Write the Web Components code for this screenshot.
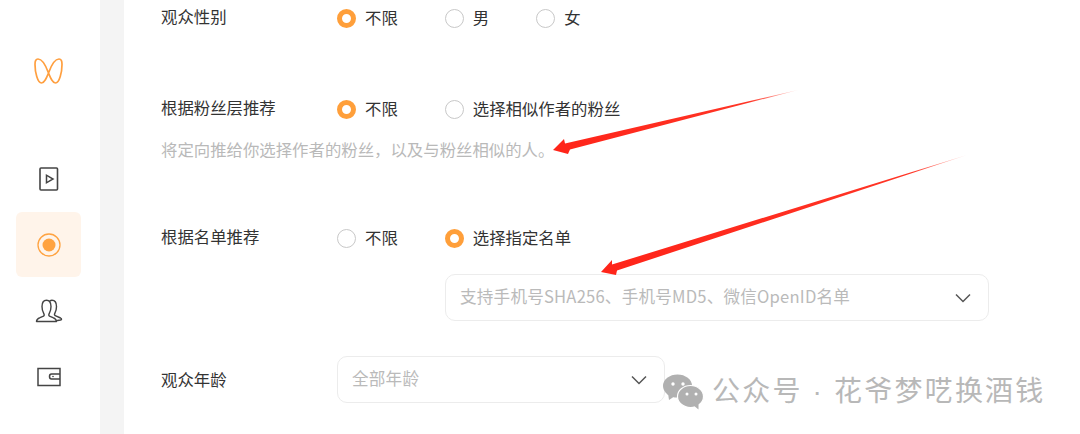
<!DOCTYPE html>
<html lang="zh">
<head>
<meta charset="utf-8">
<style>
    html, body { margin: 0; height: 434px; overflow: hidden; background: #fff; }
    body {
        font-family: "Noto Sans CJK SC", "Liberation Sans", sans-serif;
        color: #333;
        font-size: 16.4px;
    }
</style>
</head>
<body>
<app-page>
    <side-nav slot="nav"></side-nav>
    <form-row label="观众性别">
        <radio-group options="不限,男,女" selected="0"></radio-group>
    </form-row>
    <form-row label="根据粉丝层推荐" style="margin-top:67px">
        <radio-group options="不限,选择相似作者的粉丝" selected="0"></radio-group>
        <span slot="hint">将定向推给你选择作者的粉丝，以及与粉丝相似的人。</span>
    </form-row>
    <form-row label="根据名单推荐" style="margin-top:65px">
        <radio-group options="不限,选择指定名单" selected="1"></radio-group>
        <select-box indent placeholder="支持手机号SHA256、手机号MD5、微信OpenID名单"></select-box>
    </form-row>
    <form-row label="观众年龄" style="margin-top:35px" center>
        <select-box short placeholder="全部年龄"></select-box>
    </form-row>
    <red-arrows slot="over"></red-arrows>
    <water-mark slot="over"></water-mark>
</app-page>

<script>
class AppPage extends HTMLElement {
    constructor() {
        super();
        this.attachShadow({ mode: 'open' });
        this.shadowRoot.innerHTML = `
            <style>
                :host { display: flex; position: relative; width: 1080px; height: 434px; overflow: hidden; }
                .gutter { width: 24px; flex: none; background: #f4f4f4; }
                .main { flex: 1; padding: 6px 0 0 37px; }
            </style>
            <slot name="nav"></slot>
            <div class="gutter"></div>
            <div class="main"><slot></slot></div>
            <slot name="over"></slot>
        `;
    }
}

class SideNav extends HTMLElement {
    constructor() {
        super();
        this.attachShadow({ mode: 'open' });
        this.shadowRoot.innerHTML = `
            <style>
                :host { display: block; width: 100px; flex: none; background: #fff; }
                .logo { height: 146px; padding: 58px 0 0 34px; box-sizing: border-box; }
                .item { width: 65px; height: 65px; margin: 0 0 1px 16px; border-radius: 6px; display: flex; align-items: center; justify-content: center; }
                .on { background: #fff4ea; }
                svg { display: block; fill: none; }
            </style>
            <div class="logo">
                <svg width="29" height="26" viewBox="0 0 29 26" stroke="#ff9f3f" stroke-width="1.700">
                    <path d="M14.500 15C12 8 8 1 4 1C1.800 1 1 3 1 6.500C1 14 3.500 25 7.500 25C10.500 25 12.500 20 14.500 15C16.500 20 18.500 25 21.500 25C25.500 25 28 14 28 6.500C28 3 27.200 1 25 1C21 1 17 8 14.500 15Z"/>
                </svg>
            </div>
            <div class="item">
                <svg width="20" height="24" viewBox="0 0 20 24" stroke="#444" stroke-width="1.600">
                    <rect x="1" y="1" width="17.500" height="22" rx="1"/>
                    <path d="M7.500 8.200V15.800L14 12Z" stroke-width="1.500"/>
                </svg>
            </div>
            <div class="item on">
                <svg width="24" height="24" viewBox="0 0 24 24">
                    <circle cx="12" cy="12" r="11" stroke="#ffa341" stroke-width="1.300"/>
                    <circle cx="12" cy="12" r="6.500" fill="#ffa341"/>
                </svg>
            </div>
            <div class="item">
                <svg width="28" height="24" viewBox="0 0 28 24" stroke="#444" stroke-width="1.400" stroke-linejoin="round" stroke-linecap="round">
                    <path d="M1.500 22.500C1.500 20.500 3 19.500 5 18.700L8.500 17.200C9.500 16.500 9.200 15 8.500 13.800C7.500 12 7 10 7 7.500C7 3.500 8.800 1.200 11.500 1.200C14.200 1.200 16 3.500 16 7.500C16 10 15.500 12 14.500 13.800C13.800 15 13.500 16.500 14.500 17.200L18 18.700C20 19.500 21.500 20.500 21.500 22.500Z"/>
                    <path d="M14.800 2C15.500 1.400 16.200 1.200 17 1.200C19.700 1.200 21.500 3.500 21.500 7.500C21.500 10 21 12 20 13.800C19.300 15 19.200 16 20.200 16.700L25.500 19C27 19.800 26.800 20.600 25.500 21L22.500 21.500"/>
                </svg>
            </div>
            <div class="item">
                <svg width="24" height="20" viewBox="0 0 24 20" stroke="#444" stroke-width="1.500">
                    <path d="M1 1.500H23V18.500H1Z"/>
                    <path d="M23 7H14.500C13.200 7 12.500 8 12.500 9.500C12.500 11 13.200 12 14.500 12H23"/>
                    <circle cx="16" cy="9.500" r=".8" fill="#444" stroke="none"/>
                </svg>
            </div>
        `;
    }
}

class FormRow extends HTMLElement {
    constructor() {
        super();
        this.attachShadow({ mode: 'open' });
        this.shadowRoot.innerHTML = `
            <style>
                :host { display: grid; grid-template-columns: 176px 1fr; line-height: 24px; }
                :host([center]) { align-items: center; }
                .label { margin-top: -2px; color: #333; }
                :host([center]) .label { margin-top: -2px; }
                .hint { grid-column: 1 / 3; color: #b9b9b9; }
                ::slotted([slot=hint]) { display: block; margin-top: 16px; }
            </style>
            <div class="label"></div>
            <div class="field"><slot></slot></div>
            <div class="hint"><slot name="hint"></slot></div>
        `;
        this.shadowRoot.querySelector('.label').textContent = this.getAttribute('label');
    }
}

class RadioGroup extends HTMLElement {
    constructor() {
        super();
        this.attachShadow({ mode: 'open' });
        const selected = Number(this.getAttribute('selected'));
        const items = this.getAttribute('options').split(',').map((text, i) => `
            <label class="opt"><i class="${i === selected ? 'on' : ''}"></i><span>${text}</span></label>
        `).join('');
        this.shadowRoot.innerHTML = `
            <style>
                :host { display: flex; gap: 47px; height: 24px; }
                .opt { display: flex; align-items: center; gap: 9px; color: #333; white-space: nowrap; }
                .opt span { margin-bottom: 2px; }
                i { width: 19px; height: 19px; box-sizing: border-box; border-radius: 50%; border: 1px solid #c8c8c8; background: #fff; }
                i.on { border: 5px solid #ff9f3a; }
            </style>
            ${items}
        `;
    }
}

class SelectBox extends HTMLElement {
    constructor() {
        super();
        this.attachShadow({ mode: 'open' });
        this.shadowRoot.innerHTML = `
            <style>
                :host { display: flex; align-items: center; justify-content: space-between; box-sizing: border-box;
                    width: 544px; height: 47px; border: 1px solid #ececec; border-radius: 10px;
                    padding: 0 17px 0 14px; background: #fff; }
                :host([indent]) { margin: 24px 0 0 108px; }
                :host([short]) { width: 328px; }
                span { color: #bababa; white-space: nowrap; font-size: 16.600px; letter-spacing: .2px; margin-bottom: 3px; }
                svg { display: block; fill: none; stroke: #555; stroke-width: 1.500; }
            </style>
            <span></span>
            <svg width="16" height="10" viewBox="0 0 16 10"><path d="M1 1.500L8 8.500L15 1.500"/></svg>
        `;
        this.shadowRoot.querySelector('span').textContent = this.getAttribute('placeholder');
    }
}

class RedArrows extends HTMLElement {
    constructor() {
        super();
        this.attachShadow({ mode: 'open' });
        this.shadowRoot.innerHTML = `
            <style>
                :host { position: absolute; inset: 0; pointer-events: none; }
                svg { display: block; }
            </style>
            <svg width="1080" height="434" viewBox="0 0 1080 434">
                <defs>
                    <linearGradient id="a1" gradientUnits="userSpaceOnUse" x1="798" y1="90" x2="553" y2="150">
                        <stop offset="0" stop-color="#ff2a1a" stop-opacity=".2"/>
                        <stop offset=".2" stop-color="#ff2a1a" stop-opacity=".95"/>
                        <stop offset="1" stop-color="#ff2419"/>
                    </linearGradient>
                    <linearGradient id="a2" gradientUnits="userSpaceOnUse" x1="967" y1="155" x2="601" y2="272">
                        <stop offset="0" stop-color="#ff2a1a" stop-opacity=".2"/>
                        <stop offset=".15" stop-color="#ff2a1a" stop-opacity=".95"/>
                        <stop offset="1" stop-color="#ff2419"/>
                    </linearGradient>
                </defs>
                <path fill="url(#a1)" d="M553 150L564 139L565 143.500L798 90L570 149.500L568 154Z"/>
                <path fill="url(#a2)" d="M601 272L612 260L612 264.500L967 155L617 270.500L616 275Z"/>
            </svg>
        `;
    }
}

class WaterMark extends HTMLElement {
    constructor() {
        super();
        this.attachShadow({ mode: 'open' });
        this.shadowRoot.innerHTML = `
            <style>
                :host { position: absolute; left: 663px; top: 371px; display: flex; align-items: center; gap: 8px;
                    color: #b8b8b8; font-size: 28px; line-height: 36px; letter-spacing: 2.200px; white-space: nowrap; }
                svg { display: block; }
                .txt { margin-bottom: 2px; }
                .dot { font-family: "Liberation Sans", sans-serif; }
            </style>
            <svg width="41" height="37" viewBox="0 0 41 37">
                <ellipse cx="14.500" cy="13" rx="14.500" ry="11.500" fill="#b0b0b0"/>
                <path fill="#b0b0b0" d="M5 20L6 27L12 23Z"/>
                <ellipse cx="27.500" cy="23.500" rx="13" ry="11" fill="#b0b0b0" stroke="#fff" stroke-width="1.200"/>
                <path fill="#b0b0b0" d="M30 32L35.500 36.500L35.500 29Z"/>
                <circle cx="10" cy="11" r="1.700" fill="#fff"/>
                <circle cx="20" cy="11" r="1.700" fill="#fff"/>
                <circle cx="24" cy="21" r="1.500" fill="#fff"/>
                <circle cx="33" cy="21" r="1.500" fill="#fff"/>
            </svg>
            <span class="txt">公众号<span class="dot"> · </span>花爷梦呓换酒钱</span>
        `;
    }
}

customElements.define('app-page', AppPage);
customElements.define('side-nav', SideNav);
customElements.define('form-row', FormRow);
customElements.define('radio-group', RadioGroup);
customElements.define('select-box', SelectBox);
customElements.define('red-arrows', RedArrows);
customElements.define('water-mark', WaterMark);
</script>
</body>
</html>
